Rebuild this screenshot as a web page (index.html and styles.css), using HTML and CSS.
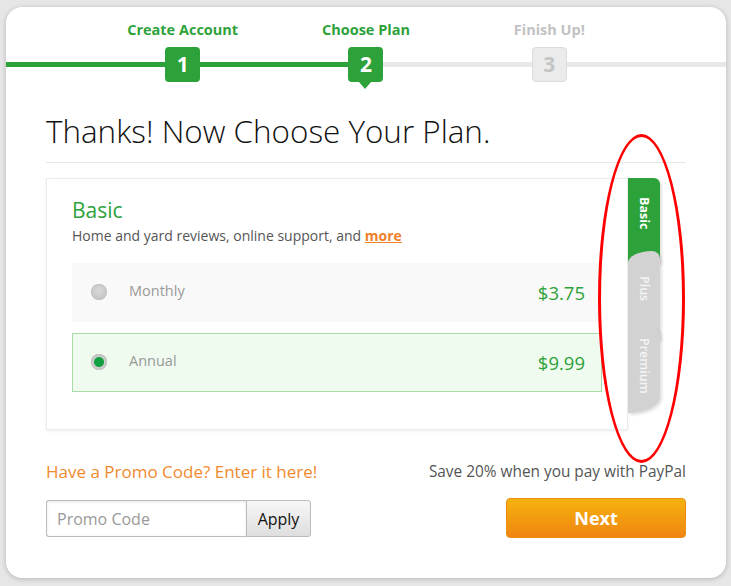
FILE: index.html
```html
<!DOCTYPE html>
<html>
<head>
<meta charset="utf-8">
<link rel="stylesheet" href="styles.css">
</head>
<body>
<div class="card">
  <div class="stepper">
    <div class="step done">
      <div class="step-label">Create Account</div>
      <div class="step-num">1</div>
    </div>
    <div class="step current">
      <div class="step-label">Choose Plan</div>
      <div class="step-num">2</div>
    </div>
    <div class="step todo">
      <div class="step-label">Finish Up!</div>
      <div class="step-num">3</div>
    </div>
  </div>

  <div class="content">
    <h1 class="title">Thanks! Now Choose Your Plan.</h1>

    <div class="plans">
      <div class="plan-box">
        <div class="plan-name">Basic</div>
        <div class="plan-desc">Home and yard reviews, online support, and <a class="more" href="#">more</a></div>
        <div class="option">
          <span class="radio"></span>
          <span class="opt-label">Monthly</span>
          <span class="price">$3.75</span>
        </div>
        <div class="option selected">
          <span class="radio on"></span>
          <span class="opt-label">Annual</span>
          <span class="price">$9.99</span>
        </div>
      </div>
      <div class="tabs">
        <div class="tab active"><span>Basic</span></div>
        <div class="tab plus"><span>Plus</span></div>
        <div class="tab premium"><span>Premium</span></div>
      </div>
    </div>

    <div class="footer">
      <div class="promo">
        <div class="promo-text">Have a Promo Code? Enter it here!</div>
        <div class="promo-group">
          <input class="promo-input" type="text" placeholder="Promo Code">
          <button class="apply">Apply</button>
        </div>
      </div>
      <div class="checkout">
        <div class="paypal">Save 20% when you pay with PayPal</div>
        <button class="next">Next</button>
      </div>
    </div>
  </div>

  <div class="annotation"></div>
</div>
</body>
</html>
```

FILE: styles.css
```css
* { box-sizing: border-box; }
html, body { margin: 0; padding: 0; }
body {
  background: #e6e6e6;
  font-family: "Open Sans", "Lato", sans-serif;
  color: #333;
  width: 731px;
  height: 586px;
  overflow: hidden;
}
.card {
  position: relative;
  margin: 7px 0 0 6px;
  width: 720px;
  height: 571px;
  background: #fff;
  border-radius: 16px;
  box-shadow: 0 1px 5px rgba(0,0,0,0.22);
}

/* stepper */
.stepper {
  display: flex;
  padding: 14px 85px 0;
  height: 90px;
  background:
    linear-gradient(#2ea23a, #2ea23a) 0 55px / 360px 5px no-repeat,
    linear-gradient(#e8e8e8, #e8e8e8) 0 55px / 100% 5px no-repeat;
}
.step {
  flex: 1;
  display: flex;
  flex-direction: column;
  align-items: center;
}
.step-label {
  font-weight: 700;
  font-size: 14.5px;
  line-height: 18px;
  color: #2ea23a;
}
.todo .step-label { color: #c2c2c2; }
.step-num {
  position: relative;
  margin-top: 8px;
  width: 35px;
  height: 35px;
  border-radius: 4px;
  background: #2ea23a;
  color: #fff;
  font-weight: 700;
  font-size: 21px;
  line-height: 35px;
  text-align: center;
}
.current .step-num::after {
  content: "";
  position: absolute;
  left: 11px;
  bottom: -7px;
  border-left: 6px solid transparent;
  border-right: 6px solid transparent;
  border-top: 7px solid #2ea23a;
}
.todo .step-num {
  background: #ebebeb;
  border: 1px solid #dcdcdc;
  color: #c4c4c4;
  line-height: 33px;
}

/* content */
.content {
  padding: 0 40px;
}
.title {
  margin: 0;
  padding: 15px 0 12px;
  font-weight: 300;
  font-size: 31.4px;
  line-height: 38px;
  color: #111;
  border-bottom: 1px solid #e8e8e8;
}
.plans {
  display: flex;
  margin-top: 15px;
}
.plan-box {
  width: 582px;
  height: 252px;
  border: 1px solid #ececec;
  box-shadow: 0 1px 3px rgba(0,0,0,0.07);
  padding: 18px 25px 0;
}
.plan-name {
  font-size: 21px;
  line-height: 26px;
  color: #2ea23a;
}
.plan-desc {
  margin-top: 4px;
  font-size: 14px;
  line-height: 18px;
  color: #555;
}
.more {
  color: #f07f2a;
  font-weight: 700;
  text-decoration: underline;
}
.option {
  display: flex;
  align-items: center;
  height: 59px;
  margin-top: 11px;
  padding: 0 16px 0 18px;
  background: #f9f9f9;
  border: 1px solid #f9f9f9;
}
.plan-desc + .option { margin-top: 18px; }
.option.selected {
  background: #effbef;
  border-color: #a8dba8;
}
.radio {
  width: 16px;
  height: 16px;
  border-radius: 50%;
  background: radial-gradient(circle at 50% 40%, #d8d8d8, #bdbdbd);
  box-shadow: inset 0 0 0 1px #c4c4c4;
  margin-top: -2px;
}
.radio.on {
  background: radial-gradient(circle, #10a040 0 4.5px, #d0d0d0 5.5px, #bbb 8px);
}
.opt-label {
  margin-left: 22px;
  font-size: 14.5px;
  color: #999;
  flex: 1;
  margin-top: -5px;
}
.price {
  font-size: 18.5px;
  color: #2ea23a;
}

/* tabs */
.tabs {
  width: 32px;
  display: flex;
  flex-direction: column;
}
.tab {
  writing-mode: vertical-rl;
  color: #f4f4f4;
  font-weight: 700;
  font-size: 12.5px;
  line-height: 16px;
  background: #d2d2d2;
  box-shadow: 2px 2px 3px rgba(0,0,0,0.12);
  padding-right: 8px;
}
.tab.active {
  background: #2ea23a;
  color: #fff;
  height: 85px;
  padding-top: 19px;
  border-radius: 0 6px 0 0;
}
.tab.plus {
  margin-top: -12px;
  height: 89px;
  padding-top: 25px;
  border-radius: 24px 8px 0 0 / 12px 8px 0 0;
  font-weight: 600;
}
.tab.premium {
  margin-top: -12px;
  height: 85px;
  padding-top: 10px;
  border-radius: 24px 8px 32px 0 / 12px 8px 16px 0;
  font-weight: 600;
}

/* footer */
.footer {
  display: flex;
  justify-content: space-between;
  margin-top: 32px;
}
.promo-text {
  font-size: 17px;
  line-height: 20px;
  color: #f08a2e;
}
.promo-group {
  display: flex;
  margin-top: 18px;
}
.promo-input {
  width: 200px;
  height: 37px;
  border: 1px solid #bbb;
  border-right: none;
  border-radius: 3px 0 0 3px;
  box-shadow: inset 0 1px 3px rgba(0,0,0,0.1);
  padding: 0 10px;
  font-family: inherit;
  font-size: 16px;
  color: #333;
}
.promo-input::placeholder { color: #999; }
.apply {
  width: 65px;
  height: 37px;
  border: 1px solid #bbb;
  border-radius: 0 3px 3px 0;
  background: linear-gradient(#f7f7f7, #dedede);
  font-family: inherit;
  font-size: 16px;
  color: #111;
}
.checkout {
  display: flex;
  flex-direction: column;
  align-items: flex-end;
}
.paypal {
  font-size: 15.4px;
  line-height: 20px;
  color: #555;
}
.next {
  margin-top: 16px;
  width: 180px;
  height: 40px;
  border: 1px solid #ea8e12;
  border-radius: 4px;
  background: linear-gradient(#f5b20f, #f08510);
  color: #fff;
  font-family: inherit;
  font-weight: 700;
  font-size: 18px;
}

/* red annotation ellipse */
.annotation {
  position: absolute;
  left: 592px;
  top: 127px;
  width: 87px;
  height: 329px;
  border: 3px solid #f00;
  border-radius: 50%;
  pointer-events: none;
}
```
